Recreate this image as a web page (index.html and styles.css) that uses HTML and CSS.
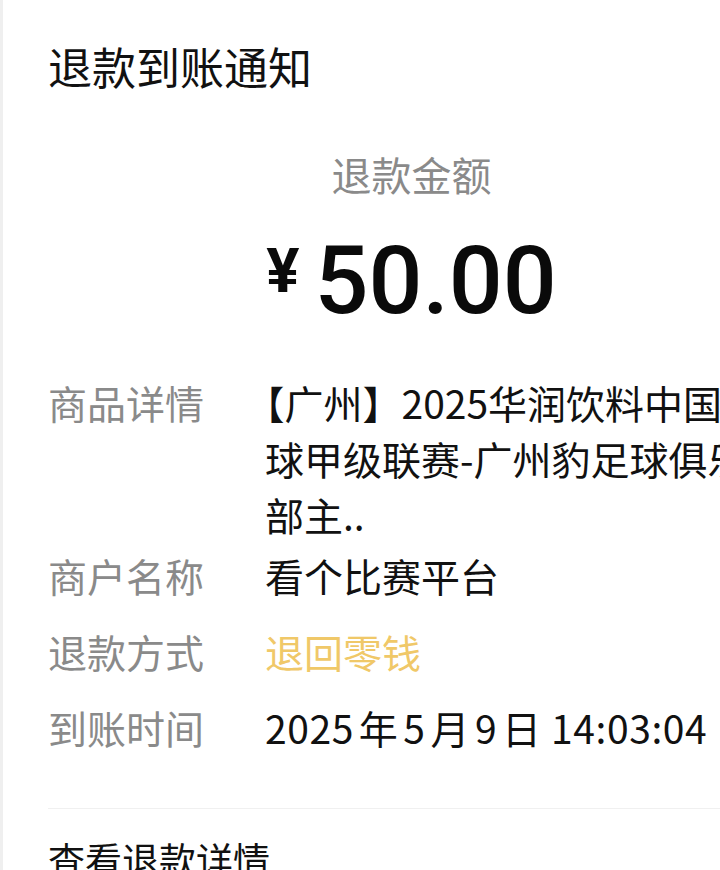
FILE: index.html
```html
<!DOCTYPE html>
<html lang="zh-CN">
<head>
<meta charset="utf-8">
<title>退款到账通知</title>
<link rel="stylesheet" href="styles.css">
</head>
<body>
<div class="card">
  <h1 class="title">退款到账通知</h1>
  <div class="amount-label">退款金额</div>
  <div class="amount"><span class="yen">¥</span>50.00</div>
  <div class="row row-first">
    <div class="label">商品详情</div>
    <div class="value product">【广州】2025华润饮料中国足球甲级联赛-广州豹足球俱乐部主..</div>
  </div>
  <div class="row row-tight">
    <div class="label">商户名称</div>
    <div class="value">看个比赛平台</div>
  </div>
  <div class="row">
    <div class="label">退款方式</div>
    <div class="value gold">退回零钱</div>
  </div>
  <div class="row">
    <div class="label">到账时间</div>
    <div class="value date">2025年5月9日 14:03:04</div>
  </div>
  <div class="footer">查看退款详情</div>
</div>
</body>
</html>
```
FILE: styles.css
```css
html, body {
  margin: 0;
  padding: 0;
  background: #ffffff;
  overflow: hidden;
}

body {
  width: 720px;
  height: 870px;
  font-family: "Noto Sans CJK SC", "Noto Sans", sans-serif;
  color: #111111;
}

.card {
  width: 818px;
  min-height: 870px;
  box-sizing: border-box;
  border-left: 3px solid #efefef;
  padding: 36px 43px 0 45px;
}

.title {
  margin: 0;
  font-size: 44px;
  line-height: 60px;
  font-weight: 400;
  color: #111111;
}

.amount-label {
  margin-top: 50px;
  text-align: center;
  font-size: 40px;
  line-height: 56px;
  color: #8a8a8a;
}

.amount {
  margin-top: 23px;
  text-align: center;
  font-family: Roboto, "Liberation Sans", sans-serif;
  font-weight: 500;
  font-size: 95px;
  line-height: 111px;
  color: #0a0a0a;
}

.yen {
  font-size: 62px;
  font-weight: 700;
  line-height: 1;
  vertical-align: 21px;
  margin-right: 15px;
}

.row {
  display: grid;
  grid-template-columns: 217px 510px;
  margin-top: 20px;
  font-size: 39px;
  line-height: 56px;
}

.row-first {
  margin-top: 38px;
}

.row-tight {
  margin-top: 5px;
}

.label {
  color: #8a8a8a;
}

.value {
  color: #111111;
}

.product {
  text-spacing-trim: trim-start;
}

.gold {
  color: #f0c868;
}

.date {
  text-autospace: normal;
  white-space: nowrap;
  letter-spacing: 0.6px;
}

.footer {
  margin-top: 53px;
  border-top: 1px solid #f0f0f0;
  padding-top: 22px;
  font-size: 37px;
  line-height: 56px;
  color: #111111;
}
```
